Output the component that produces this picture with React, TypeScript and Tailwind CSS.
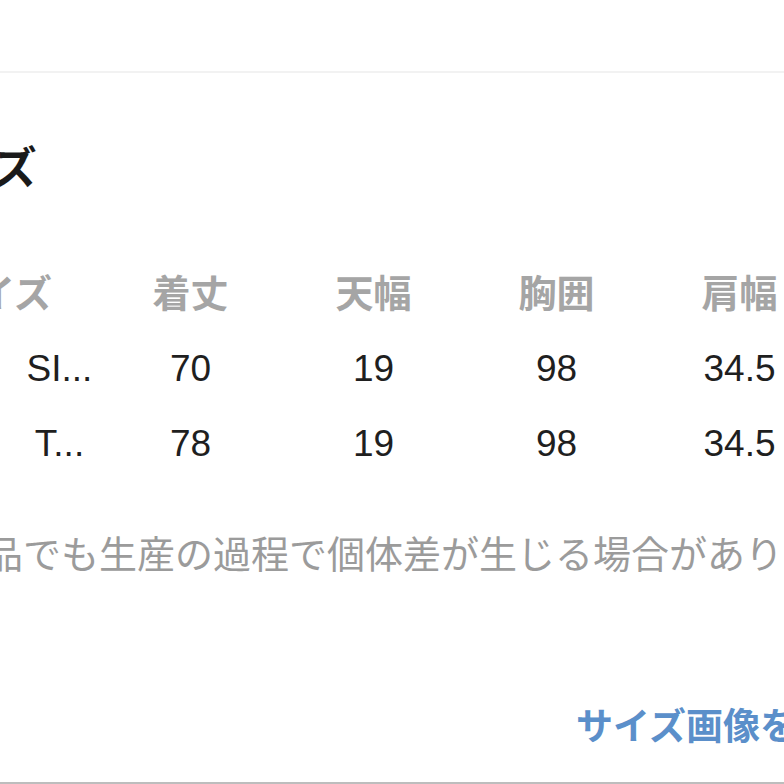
const font = { fontFamily: '"Liberation Sans", "Noto Sans CJK JP", sans-serif' };

const rows = [
  { size: "SI...", length: "70", top: "19", chest: "98", shoulder: "34.5" },
  { size: "T...", length: "78", top: "19", chest: "98", shoulder: "34.5" },
];

export default function App() {
  return (
    <div className="w-[784px] h-[784px] overflow-hidden bg-white flex flex-col" style={font}>
      <div className="h-[71px] shrink-0" />
      <div className="h-[2px] shrink-0 bg-[#f2f2f2]" />

      <h2 className="mt-[74px] ml-[-94px] whitespace-nowrap text-[44px] leading-[44px] font-bold text-[#1a1a1a]">
        サイズ
      </h2>

      <div className="mt-[65px] ml-[-84px] w-[915px] shrink-0">
        <div className="grid grid-cols-[183px_183px_183px_183px_183px] h-[75px] items-center text-[38px] leading-[38px] font-bold text-[#a5a5a5]">
          <div className="text-right pr-[47px] whitespace-nowrap">サイズ</div>
          <div className="text-center">着丈</div>
          <div className="text-center">天幅</div>
          <div className="text-center">胸囲</div>
          <div className="text-center">肩幅</div>
        </div>
        {rows.map((r) => (
          <div
            key={r.size}
            className="grid grid-cols-[183px_183px_183px_183px_183px] h-[75px] items-center text-[37px] leading-[38px] text-[#1f1f1f]"
          >
            <div className="pl-[104px] text-center whitespace-nowrap">{r.size}</div>
            <div className="text-center">{r.length}</div>
            <div className="text-center">{r.top}</div>
            <div className="text-center">{r.chest}</div>
            <div className="text-center">{r.shoulder}</div>
          </div>
        ))}
      </div>

      <p className="mt-[55px] ml-[-129px] whitespace-nowrap text-[38px] leading-[38px] text-[#9b9b9b]">
        同じ商品でも生産の過程で個体差が生じる場合があります。
      </p>

      <div className="mt-[135px] pl-[576px] whitespace-nowrap text-[37px] leading-[37px] font-bold text-[#5b8fca]">
        サイズ画像を見る
      </div>

      <div className="flex-1" />
      <div className="h-[2px] shrink-0 bg-[#bdbdbd]" />
    </div>
  );
}
